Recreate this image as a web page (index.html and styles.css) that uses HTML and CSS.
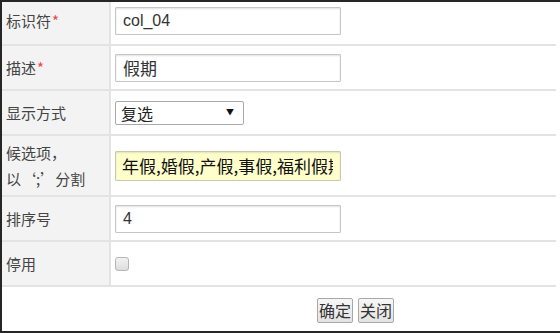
FILE: index.html
```html
<!DOCTYPE html>
<html lang="zh-CN">
<head>
<meta charset="utf-8">
<title>字段编辑</title>
<link rel="stylesheet" href="styles.css">
</head>
<body>
<div class="frame">
  <table class="form">
    <tr class="row row-first">
      <td class="label">标识符<span class="req">*</span></td>
      <td class="field"><input class="text" type="text" value="col_04"></td>
    </tr>
    <tr class="row">
      <td class="label">描述<span class="req">*</span></td>
      <td class="field"><input class="text text-cjk" type="text" value="假期"></td>
    </tr>
    <tr class="row">
      <td class="label">显示方式</td>
      <td class="field">
        <div class="select-wrap">
          <select class="select"><option>复选</option></select>
          <span class="arrow">▼</span>
        </div>
      </td>
    </tr>
    <tr class="row row-tall">
      <td class="label label-multi">候选项，<br>以‘;’分割</td>
      <td class="field"><input class="text text-cjk text-yellow" type="text" value="年假,婚假,产假,事假,福利假期"></td>
    </tr>
    <tr class="row">
      <td class="label">排序号</td>
      <td class="field"><input class="text" type="text" value="4"></td>
    </tr>
    <tr class="row">
      <td class="label">停用</td>
      <td class="field"><input class="check" type="checkbox"></td>
    </tr>
  </table>
  <div class="actions">
    <button class="btn" type="button">确定</button>
    <button class="btn" type="button">关闭</button>
  </div>
</div>
</body>
</html>
```
FILE: styles.css
```css
html, body {
  margin: 0;
  padding: 0;
  background: #fff;
}

.frame {
  width: 560px;
  height: 333px;
  box-sizing: border-box;
  border-top: 2px solid #262626;
  border-left: 2px solid #262626;
  border-bottom: 2px solid #262626;
  background: #fff;
  font-family: "Noto Sans CJK SC", "Liberation Sans", sans-serif;
  overflow: hidden;
}

.form {
  width: 554px;
  border-collapse: collapse;
  border-spacing: 0;
}

.row td {
  height: 45px;
  padding: 0;
  border-bottom: 2px solid #e3e3e3;
  vertical-align: middle;
  box-sizing: border-box;
}

.row-first td {
  height: 43px;
  padding-bottom: 4px;
}

.row-tall td {
  height: 61px;
}

.label {
  width: 108px;
  background: #f3f3f3;
  border-right: 2px solid #e3e3e3;
  padding-left: 4px !important;
  font-size: 15px;
  color: #444;
  line-height: 20px;
  white-space: nowrap;
}

.label-multi {
  line-height: 26px;
}

.req {
  color: #f04848;
  margin-left: 1px;
}

.field {
  padding-left: 4px !important;
}

.text {
  display: block;
  width: 226px;
  height: 28px;
  box-sizing: border-box;
  margin: 0;
  padding: 0 7px;
  border: 1px solid #c6c6c6;
  border-radius: 1px;
  box-shadow: inset 0 1px 2px rgba(0, 0, 0, 0.12);
  background: #fff;
  font-family: "Liberation Sans", "Noto Sans CJK SC", sans-serif;
  font-size: 16px;
  color: #333;
  outline: none;
}

.text-cjk {
  font-family: "Noto Sans CJK SC", sans-serif;
  font-size: 17px;
}

.text-yellow {
  height: 30px;
  background: #ffffcc;
  border-color: #c8c8b4;
  color: #111;
  padding-left: 6px;
}

.select-wrap {
  position: relative;
  width: 129px;
  height: 24px;
}

.select {
  appearance: none;
  -webkit-appearance: none;
  display: block;
  width: 129px;
  height: 24px;
  box-sizing: border-box;
  margin: 0;
  padding: 0 0 0 5px;
  border: 1px solid #a9a9a9;
  border-radius: 2px;
  background: #fff;
  font-family: "Noto Sans CJK SC", sans-serif;
  font-size: 16px;
  color: #222;
  line-height: 22px;
}

.arrow {
  position: absolute;
  right: 10px;
  top: 6px;
  font-size: 8px;
  line-height: 10px;
  color: #111;
  pointer-events: none;
}

.check {
  appearance: none;
  -webkit-appearance: none;
  display: block;
  width: 14px;
  height: 14px;
  margin: 0;
  border: 1px solid #b5b5b5;
  border-radius: 3px;
  background: linear-gradient(#f2f2f2, #dedede);
}

.actions {
  display: flex;
  gap: 5px;
  padding: 11px 0 0 315px;
}

.btn {
  height: 25px;
  margin: 0;
  padding: 0 1px;
  border: 1px solid #a8a8a8;
  border-radius: 2px;
  background: linear-gradient(#f7f7f7, #e3e3e3);
  font-family: "Noto Sans CJK SC", sans-serif;
  font-size: 16px;
  line-height: 21px;
  color: #333;
}
```
